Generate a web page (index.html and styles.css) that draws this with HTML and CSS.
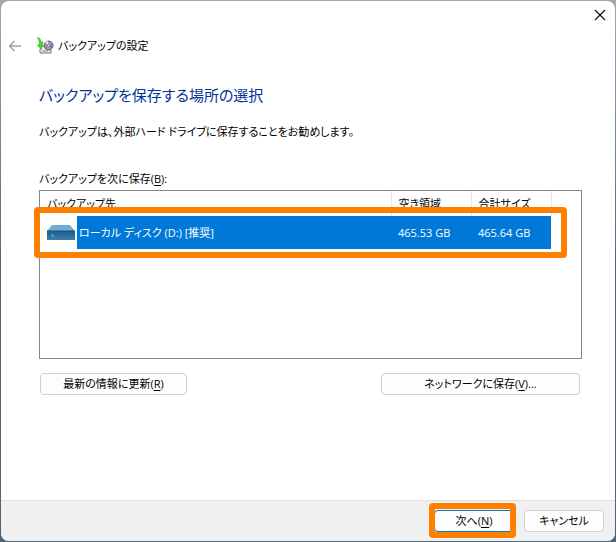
FILE: index.html
```html
<!DOCTYPE html>
<html lang="ja">
<head>
<meta charset="utf-8">
<title>バックアップの設定</title>
<link rel="stylesheet" href="styles.css">
</head>
<body>
<div class="dialog">
  <div class="titlebar">
    <button class="icon-button" type="button" aria-label="閉じる">
      <svg width="12" height="12" viewBox="0 0 12 12" fill="none" stroke="#111" stroke-width="1.2"><path d="M1 1l10 10M11 1L1 11"/></svg>
    </button>
  </div>
  <header class="header">
    <button class="icon-button" type="button" aria-label="戻る" disabled>
      <svg width="14" height="12" viewBox="0 0 14 12" fill="none" stroke="#a0a0a0" stroke-width="1.4"><path d="M13 6H1.5M6.500 1L1.500 6l5 5"/></svg>
    </button>
    <svg class="app-icon" width="17" height="17" viewBox="0 0 17 17">
      <path d="M3 12l2-3h7l2 5v2H3z" fill="#eceeee" stroke="#6d7376"/>
      <path d="M5 14h6" stroke="#888"/>
      <circle cx="11.500" cy="8.500" r="4.500" fill="#9699ab" stroke="#5b5e6c"/>
      <path d="M11.500 8.500L8 5.500a4.500 4.500 0 0 1 3-1.500z" fill="#e5e6ee"/>
      <path d="M11.500 8.500L7.500 10a4.500 4.500 0 0 1 0-3z" fill="#c9765c"/>
      <path d="M11.500 8.500l4-1a4.500 4.500 0 0 1-1 4z" fill="#7178b0"/>
      <circle cx="11.500" cy="8.500" r="1.200" fill="#fff" stroke="#777"/>
      <path d="M.5.500C3 1 4 3 4 6l1.800-1.500L4.500 12 .5 8.500l1.600-.5C2.800 5 2 3 .5.500z" fill="#38e01e" stroke="#20a616" stroke-width=".6"/>
    </svg>
    <span>バックアップの設定</span>
  </header>
  <main class="content">
    <h1>バックアップを保存する場所の選択</h1>
    <p class="advice">バックアップは、外部ハード ドライブに保存することをお勧めします。</p>
    <p class="list-label" id="list-label">バックアップを次に保存(<u>B</u>):</p>
    <div class="list">
      <table aria-labelledby="list-label">
        <thead>
          <tr><th>バックアップ先</th><th class="size">空き領域</th><th class="size">合計サイズ</th><th class="rest"></th></tr>
        </thead>
        <tbody>
          <tr>
            <td class="name">
              <div class="drive">
                <svg width="28" height="15" viewBox="0 0 28 15">
                  <defs><linearGradient id="front" x2="0" y2="1"><stop stop-color="#235c89"/><stop offset="1" stop-color="#397fab"/></linearGradient></defs>
                  <path d="M5 0h18l5 6H0z" fill="#72acd9"/>
                  <path d="M0 6h28v9H0z" fill="url(#front)"/>
                  <path d="M0 6h28" stroke="#174e78"/>
                  <circle cx="5.500" cy="10.500" r="1" fill="#43e2a1"/>
                </svg>
                <span class="drive-name">ローカル ディスク (D:) [推奨]</span>
              </div>
            </td>
            <td class="selected">465.53 GB</td><td class="selected">465.64 GB</td><td></td>
          </tr>
        </tbody>
      </table>
      <div class="marker row-marker"></div>
    </div>
    <div class="actions">
      <button class="button refresh" type="button">最新の情報に更新(<u>R</u>)</button>
      <button class="button network" type="button">ネットワークに保存(<u>V</u>)...</button>
    </div>
  </main>
  <footer class="footer">
    <div class="next-wrap">
      <button class="button primary" type="button">次へ(<u>N</u>)</button>
      <div class="marker next-marker"></div>
    </div>
    <button class="button" type="button">キャンセル</button>
  </footer>
</div>
</body>
</html>
```
FILE: styles.css
```css
* {
  box-sizing: border-box;
}

body {
  margin: 0;
  padding: 1px;
  min-height: 100vh;
  display: flex;
  background: linear-gradient(#a9a7ab, #4f657b 50%, #4f657b);
  color: #000;
  font: 11px/16px "Open Sans", "Noto Sans CJK JP", sans-serif;
  font-feature-settings: "palt";
}

button {
  font: inherit;
  font-feature-settings: inherit;
  color: inherit;
}

u {
  text-underline-offset: 2px;
}

.dialog {
  flex: 1;
  display: flex;
  flex-direction: column;
  background: #fff;
  border-radius: 8px;
  overflow: hidden;
}

.titlebar {
  display: flex;
  justify-content: flex-end;
  padding: 8px 9px 0;
}

.icon-button {
  display: flex;
  padding: 0;
  border: 0;
  background: none;
}

.header {
  display: flex;
  align-items: center;
  padding: 16px 7px 0;
}

.app-icon {
  margin: 0 4px 0 15px;
}

.content {
  flex: 1;
  padding: 29px 33px 0 38px;
}

h1 {
  margin: 0;
  color: #003399;
  font-size: 15px;
  font-weight: 400;
  line-height: 24px;
}

.advice {
  margin: 17px 0 0;
}

.list-label {
  margin: 31px 0 0;
}

.list {
  position: relative;
  height: 169px;
  margin-top: 3px;
  border: 1px solid #828790;
}

table {
  width: 100%;
  border-collapse: collapse;
  table-layout: fixed;
}

th {
  height: 25px;
  padding: 0 7px;
  border-right: 1px solid #e5e5e5;
  font-weight: 400;
  text-align: left;
}

th.size {
  width: 80px;
}

th.rest {
  width: 30px;
  border: 0;
}

td {
  height: 33px;
  padding: 0;
}

.name {
  padding-left: 7px;
}

.drive {
  display: flex;
  align-items: center;
}

.drive-name {
  flex: 1;
  margin-left: 2px;
  padding-left: 2px;
  background: #0078d7;
  color: #fff;
  line-height: 33px;
}

.selected {
  padding-left: 7px;
  background: #0078d7;
  color: #fff;
}

.marker {
  position: absolute;
  border: 6px solid #ff8000;
  border-radius: 4px;
  pointer-events: none;
}

.row-marker {
  inset: 16px 14px auto -6px;
  height: 51px;
}

.actions {
  display: flex;
  justify-content: space-between;
  padding: 14px 2px 0 1px;
}

.button {
  width: 80px;
  height: 22px;
  padding: 0;
  border: 1px solid #d0d0d0;
  border-radius: 4px;
  background: #fdfdfd;
  line-height: 16px;
}

.refresh {
  width: 147px;
}

.network {
  width: 199px;
}

.primary {
  display: block;
  border-color: #0078d4;
}

.footer {
  display: flex;
  justify-content: flex-end;
  gap: 10px;
  padding: 9px 11px;
  border-top: 1px solid #dfdfdf;
  background: #f0f0f0;
}

.next-wrap {
  position: relative;
}

.next-marker {
  inset: -7px -2px -6px -5px;
}
```
